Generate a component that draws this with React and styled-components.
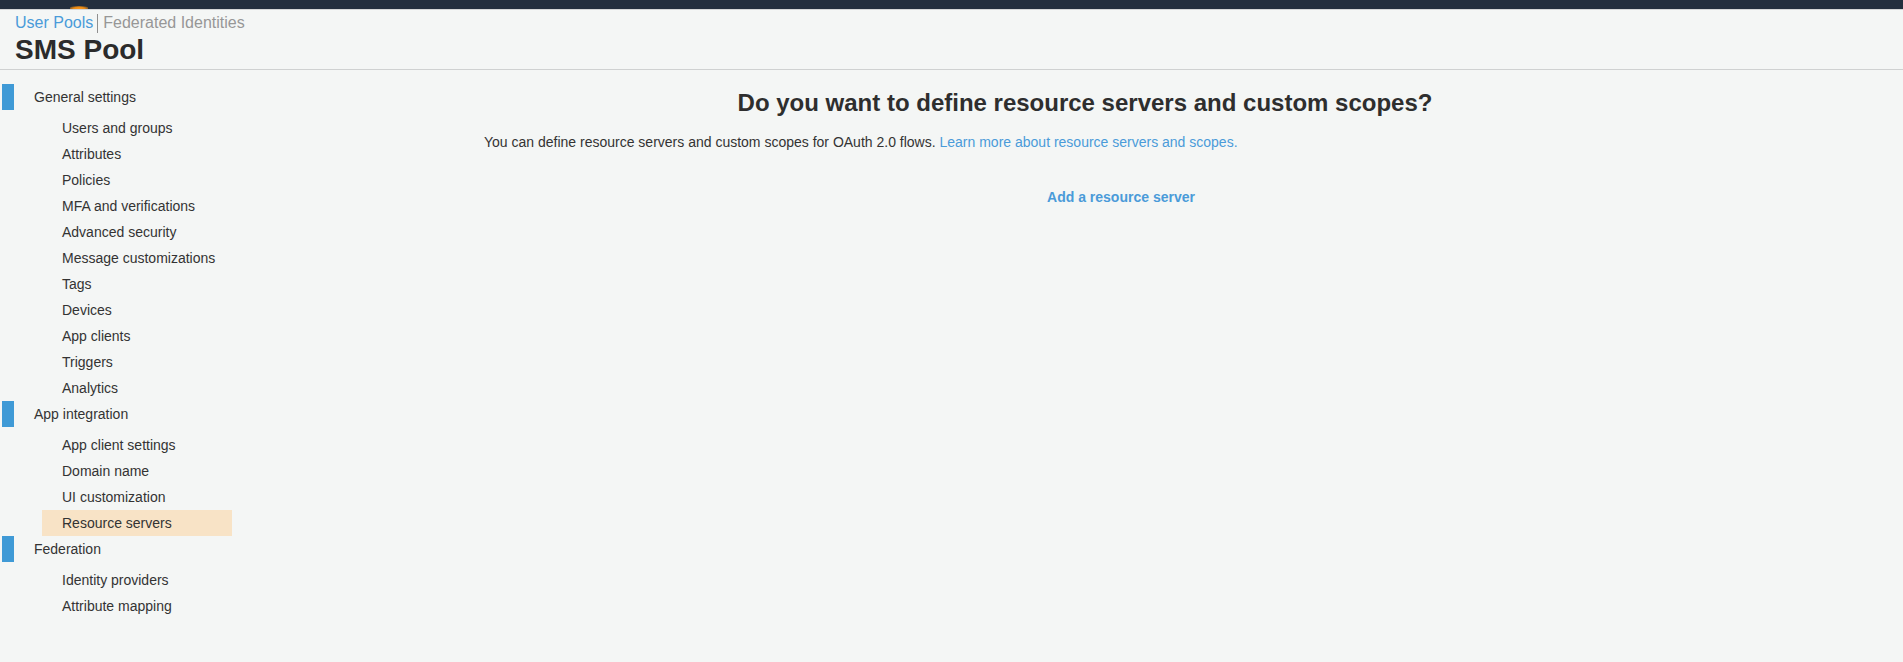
import React from 'react';
import styled, {createGlobalStyle} from 'styled-components';

const GlobalStyle = createGlobalStyle`
  html, body {
    margin: 0;
    padding: 0;
    background: #f4f6f5;
    font-family: "Liberation Sans", Arial, sans-serif;
    color: #333;
  }
`;

const Page = styled.div`
  min-height: 662px;
  background: #f4f6f5;
`;

const TopBar = styled.div`
  position: relative;
  height: 9px;
  background: #232f3e;
  border-bottom: 1px solid #d3d6d6;
`;

const LogoGlow = styled.span`
  position: absolute;
  left: 70px;
  bottom: 0;
  width: 18px;
  height: 3px;
  border-radius: 50% 50% 0 0;
  background: radial-gradient(ellipse at 50% 100%, #ff9a1f 0%, #e88a14 45%, rgba(35, 47, 62, 0) 100%);
`;

const Header = styled.header`
  padding: 3px 0 3px 15px;
  border-bottom: 1px solid #cfd1d1;
`;

const Crumbs = styled.div`
  display: flex;
  align-items: center;
  height: 20px;
  font-size: 16px;
  line-height: 20px;
`;

const Crumb = styled.a`
  color: ${p => (p.$active ? '#4a9bd9' : '#979797')};
  text-decoration: none;
  cursor: pointer;
`;

const CrumbSep = styled.span`
  width: 1px;
  height: 19px;
  margin: 0 5px 0 4px;
  background: #8f8f8f;
`;

const PoolTitle = styled.h1`
  margin: 1px 0 0;
  font-size: 28px;
  line-height: 32px;
  font-weight: bold;
  color: #2b2b2b;
`;

const Body = styled.div`
  display: flex;
`;

const Sidebar = styled.nav`
  width: 240px;
  flex: none;
  padding-top: 14px;
`;

const SectionHead = styled.div`
  display: flex;
  align-items: center;
  gap: 20px;
  height: 26px;
  padding-left: 2px;
  font-size: 14px;
  color: #333;
`;

const Marker = styled.span`
  width: 12px;
  height: 26px;
  background: #3f9ad6;
`;

const NavList = styled.ul`
  list-style: none;
  margin: 0;
  padding: 5px 0 0;
`;

const NavItem = styled.li`
  width: 190px;
  height: 26px;
  margin-left: 42px;
  padding-left: 20px;
  box-sizing: border-box;
  font-size: 14px;
  line-height: 26px;
  color: #333;
  background: ${p => (p.$selected ? '#f8e3c6' : 'transparent')};
  cursor: pointer;
`;

const Main = styled.main`
  flex: 1;
  padding: 18px 217px 0 244px;
`;

const Heading = styled.h2`
  margin: 0;
  font-size: 24px;
  line-height: 30px;
  font-weight: bold;
  text-align: center;
  color: #2e2e2e;
`;

const Intro = styled.p`
  margin: 14px 0 0;
  font-size: 14px;
  line-height: 20px;
  color: #333;
`;

const Link = styled.a`
  color: #4a9bd9;
  text-decoration: none;
  cursor: pointer;
  font-weight: ${p => (p.$strong ? 'bold' : 'normal')};
`;

const ActionRow = styled.div`
  margin-top: 35px;
  padding-left: 72px;
  font-size: 14px;
  line-height: 20px;
  text-align: center;
`;

const sections = [
  {
    title: 'General settings',
    items: [
      'Users and groups',
      'Attributes',
      'Policies',
      'MFA and verifications',
      'Advanced security',
      'Message customizations',
      'Tags',
      'Devices',
      'App clients',
      'Triggers',
      'Analytics',
    ],
  },
  {
    title: 'App integration',
    items: ['App client settings', 'Domain name', 'UI customization', 'Resource servers'],
  },
  {
    title: 'Federation',
    items: ['Identity providers', 'Attribute mapping'],
  },
];

const current = 'Resource servers';

const App = () => (
  <Page>
    <GlobalStyle />
    <TopBar>
      <LogoGlow />
    </TopBar>
    <Header>
      <Crumbs>
        <Crumb $active>User Pools</Crumb>
        <CrumbSep />
        <Crumb>Federated Identities</Crumb>
      </Crumbs>
      <PoolTitle>SMS Pool</PoolTitle>
    </Header>
    <Body>
      <Sidebar>
        {sections.map(section => (
          <div key={section.title}>
            <SectionHead>
              <Marker />
              {section.title}
            </SectionHead>
            <NavList>
              {section.items.map(item => (
                <NavItem key={item} $selected={item === current}>
                  {item}
                </NavItem>
              ))}
            </NavList>
          </div>
        ))}
      </Sidebar>
      <Main>
        <Heading>Do you want to define resource servers and custom scopes?</Heading>
        <Intro>
          You can define resource servers and custom scopes for OAuth 2.0 flows.{' '}
          <Link>Learn more about resource servers and scopes.</Link>
        </Intro>
        <ActionRow>
          <Link $strong>Add a resource server</Link>
        </ActionRow>
      </Main>
    </Body>
  </Page>
);

export default App;
